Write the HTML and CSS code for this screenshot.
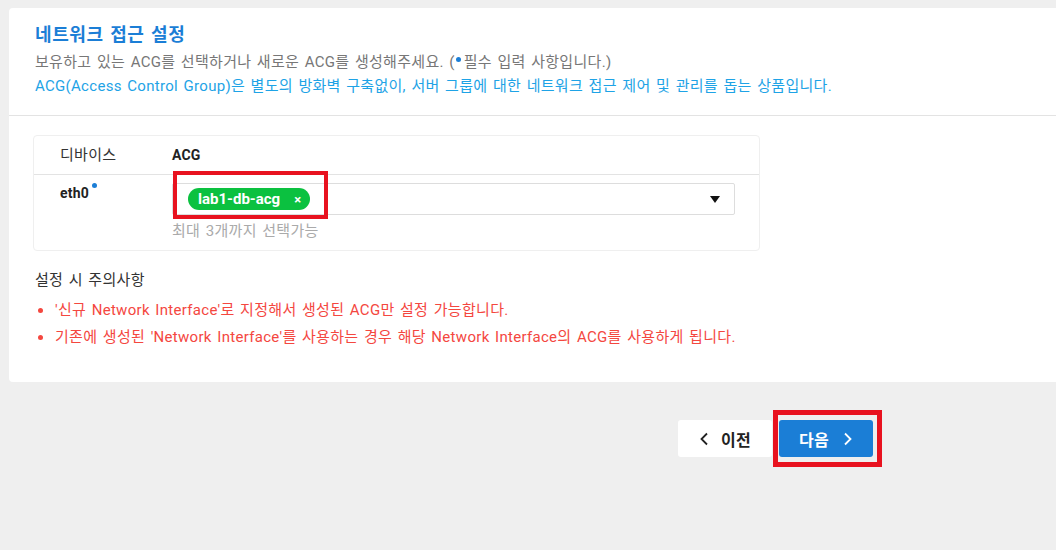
FILE: index.html
```html
<!DOCTYPE html>
<html lang="ko">
<head>
<meta charset="utf-8">
<link rel="stylesheet" href="styles.css">
</head>
<body>
<div class="card">
  <div class="card-head">
    <h1 class="title">네트워크 접근 설정</h1>
    <p class="desc">보유하고 있는 ACG를 선택하거나 새로운 ACG를 생성해주세요. (<span class="req-dot"></span>필수 입력 사항입니다.)</p>
    <p class="desc info">ACG(Access Control Group)은 별도의 방화벽 구축없이, 서버 그룹에 대한 네트워크 접근 제어 및 관리를 돕는 상품입니다.</p>
  </div>
  <div class="card-body">
    <div class="table">
      <div class="row head">
        <div class="col-dev">디바이스</div>
        <div class="col-acg acg-title">ACG</div>
      </div>
      <div class="row">
        <div class="col-dev dev-name">eth0<span class="sup-dot"></span></div>
        <div class="col-acg">
          <div class="select">
            <span class="tag">lab1-db-acg<span class="tag-x">×</span></span>
            <span class="caret"></span>
            <span class="highlight hl-tag"></span>
          </div>
          <div class="hint">최대 3개까지 선택가능</div>
        </div>
      </div>
    </div>
    <div class="notice-title">설정 시 주의사항</div>
    <ul class="notice">
      <li>'신규 Network Interface'로 지정해서 생성된 ACG만 설정 가능합니다.</li>
      <li>기존에 생성된 'Network Interface'를 사용하는 경우 해당 Network Interface의 ACG를 사용하게 됩니다.</li>
    </ul>
  </div>
</div>
<div class="actions">
  <button class="btn btn-prev"><svg width="10" height="14" viewBox="0 0 10 14"><path d="M8 1.5 2.5 7 8 12.5" fill="none" stroke="#222" stroke-width="1.8"/></svg><span>이전</span></button>
  <button class="btn btn-next"><span>다음</span><svg width="10" height="14" viewBox="0 0 10 14"><path d="M2 1.5 7.5 7 2 12.5" fill="none" stroke="#fff" stroke-width="1.8"/></svg><span class="highlight hl-btn"></span></button>
</div>
</body>
</html>
```

FILE: styles.css
```css
* { box-sizing: border-box; }
html, body { margin: 0; padding: 0; }
body {
  background: #efefef;
  font-family: Roboto, "Noto Sans CJK KR", sans-serif;
  font-size: 15px;
  letter-spacing: 0.3px;
  word-spacing: 1.5px;
  color: #333;
  width: 1056px;
  height: 550px;
  overflow: hidden;
}
.card {
  margin: 8px 0 0 9px;
  background: #fff;
  border-radius: 4px 0 0 4px;
  height: 374px;
}
.card-head {
  padding: 15px 0 17px 26px;
  border-bottom: 1px solid #e3e3e3;
}
.title {
  margin: 0 0 3px;
  font-size: 18px;
  letter-spacing: 0.6px;
  line-height: 24px;
  font-weight: 700;
  color: #1b7ed6;
}
.desc {
  margin: 0;
  line-height: 24px;
  color: #777;
}
.desc.info { color: #1ea3e6; }
.req-dot {
  display: inline-block;
  width: 5px;
  height: 5px;
  border-radius: 50%;
  background: #1b7ed6;
  margin: 0 3px 0 1px;
  vertical-align: 5px;
}
.card-body {
  padding: 19px 0 0 24px;
}
.table {
  width: 727px;
  border: 1px solid #efefef;
  border-radius: 4px;
}
.row { display: flex; }
.row.head {
  height: 39px;
  align-items: center;
  border-bottom: 1px solid #e3e3e3;
}
.col-dev { width: 138px; padding-left: 26px; }
.col-acg { flex: none; width: 563px; }
.acg-title { font-weight: 700; color: #222; font-size: 14px; letter-spacing: 0.2px; }
.row.head .col-dev, .row.head .col-acg { line-height: 20px; }
.row.head .col-dev { color: #333; }
.row:not(.head) { padding: 8px 0 9px; }
.dev-name {
  font-weight: 700;
  font-size: 14px;
  letter-spacing: 0.2px;
  color: #222;
  line-height: 20px;
  position: relative;
}
.sup-dot {
  display: inline-block;
  width: 5px;
  height: 5px;
  border-radius: 50%;
  background: #1b7ed6;
  margin-left: 3px;
  vertical-align: 10px;
}
.select {
  position: relative;
  height: 32px;
  border: 1px solid #ddd;
  border-radius: 2px;
  display: flex;
  align-items: center;
  padding: 0 14px 0 15px;
}
.tag {
  display: inline-flex;
  align-items: center;
  height: 22px;
  width: 122px;
  padding: 0 0 0 10px;
  border-radius: 11px;
  background: #0bc140;
  color: #fff;
  font-weight: 700;
  font-size: 15px;
  letter-spacing: 0;
}
.tag-x {
  margin-left: 14px;
  font-size: 13px;
  font-weight: 700;
}
.caret {
  margin-left: auto;
  width: 0;
  height: 0;
  border-left: 5px solid transparent;
  border-right: 5px solid transparent;
  border-top: 7px solid #111;
}
.highlight {
  position: absolute;
  border: 4px solid #e8121f;
  pointer-events: none;
}
.hl-tag {
  left: 0;
  top: -13px;
  width: 155px;
  height: 48px;
}
.hint {
  margin-top: 6px;
  line-height: 20px;
  color: #aaa;
}
.notice-title {
  margin-top: 19px;
  padding-left: 2px;
  line-height: 20px;
  color: #333;
}
.notice {
  margin: 7px 0 0;
  padding: 0;
  list-style: none;
  color: #f4473f;
}
.notice li {
  position: relative;
  padding-left: 22px;
  line-height: 27px;
}
.notice li::before {
  content: "";
  position: absolute;
  left: 5px;
  top: 11px;
  width: 5px;
  height: 5px;
  border-radius: 50%;
  background: #f4473f;
}
.actions {
  display: flex;
  justify-content: flex-end;
  gap: 7px;
  padding: 38px 183px 0 0;
}
.btn {
  position: relative;
  width: 94px;
  height: 37px;
  border: none;
  border-radius: 3px;
  font-family: Roboto, "Noto Sans CJK KR", sans-serif;
  font-size: 16px;
  letter-spacing: 0.3px;
  font-weight: 700;
  display: flex;
  align-items: center;
  justify-content: center;
  gap: 12px;
  padding: 0;
}
.btn-prev { background: #fff; color: #222; }
.btn-next { background: #1b7ed6; color: #fff; gap: 14px; }
.hl-btn {
  border-width: 5px;
  left: -6px;
  top: -10px;
  width: 109px;
  height: 57px;
  border-radius: 0;
}
```
